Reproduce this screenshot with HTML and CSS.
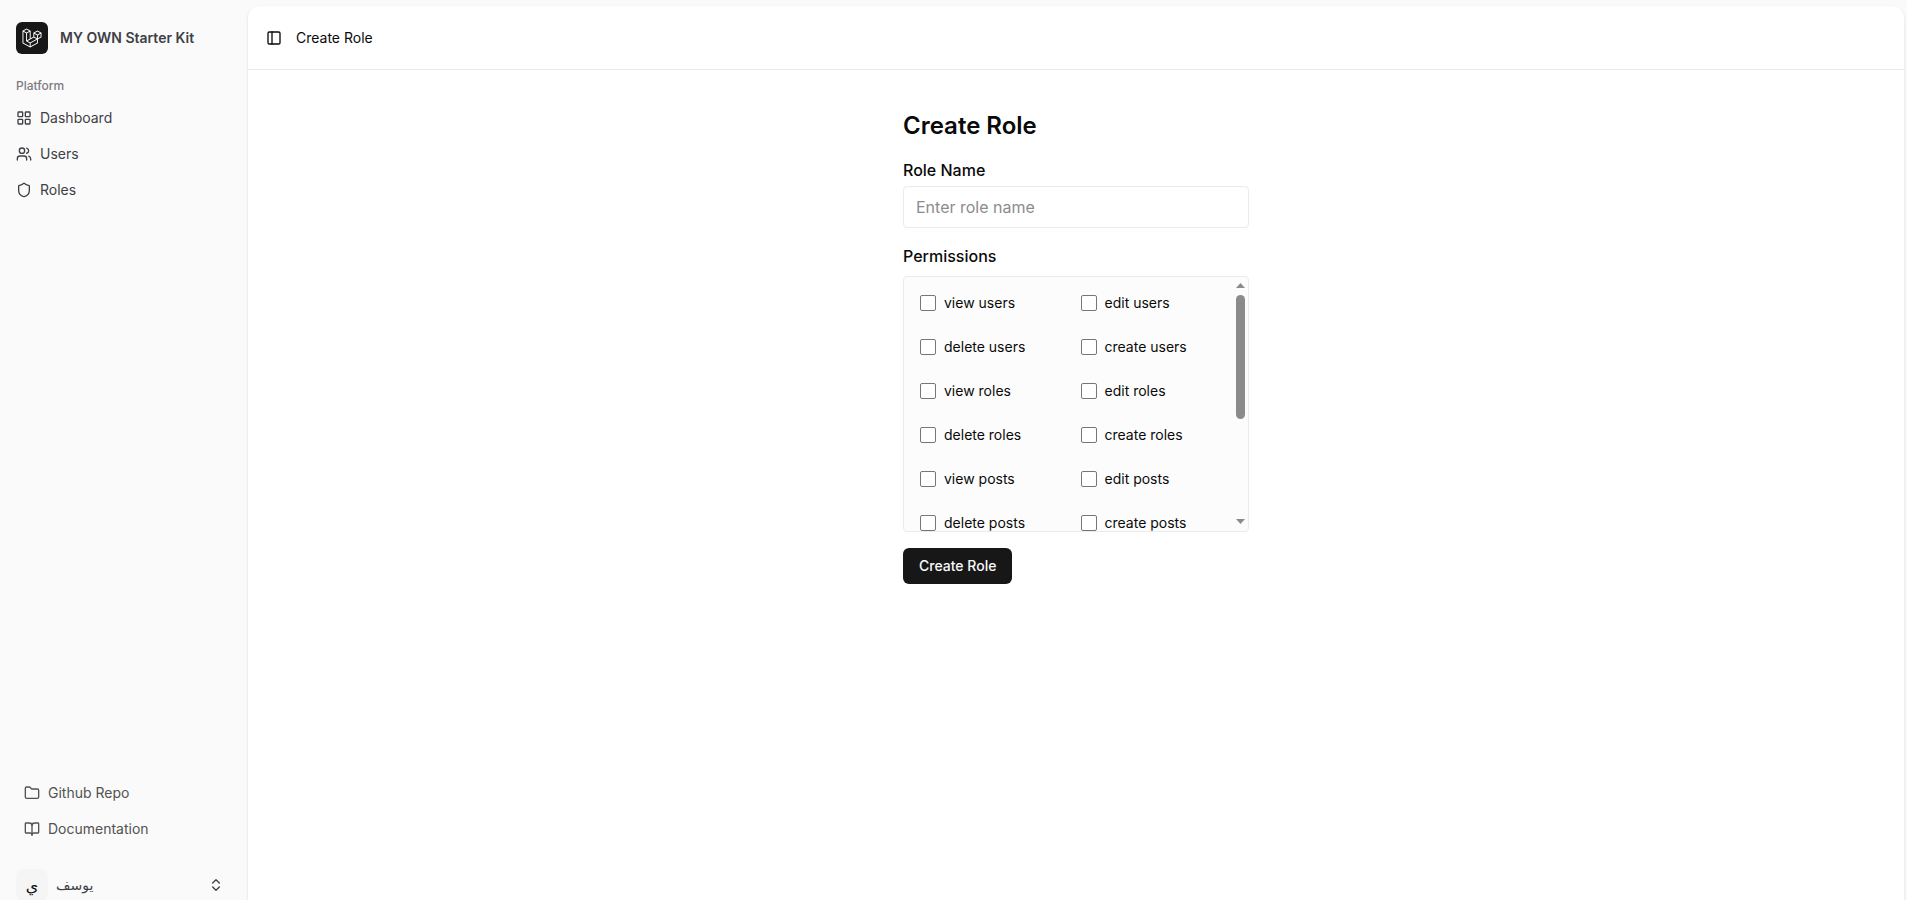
FILE: index.html
```html
<!DOCTYPE html>
<html lang="en">
<head>
<meta charset="utf-8">
<meta name="viewport" content="width=device-width, initial-scale=1">
<title>Create Role</title>
<link rel="stylesheet" href="styles.css">
</head>
<body>
<div class="shell">
  <aside class="sidebar">
    <a class="brand" href="#">
      <span class="brand-mark">
        <svg viewBox="0 0 40 42" fill="currentColor" aria-hidden="true"><path fill-rule="evenodd" clip-rule="evenodd" d="M17.2 5.633 8.6.855 0 5.633v26.51l16.2 9 16.2-9v-8.442l7.6-4.223V9.856l-8.6-4.777-8.6 4.777V18.3l-5.6 3.111V5.633ZM38 18.301l-5.6 3.11v-6.157l5.6-3.11V18.3Zm-1.06-7.856-5.54 3.078-5.54-3.079 5.54-3.078 5.54 3.079ZM24.8 18.3v-6.157l5.6 3.111v6.158L24.8 18.3Zm-1 1.732 5.54 3.078-13.14 7.302-5.54-3.078 13.14-7.3v-.002Zm-16.2 7.89 7.6 4.222V38.3L2 30.966V7.92l5.6 3.111v16.892ZM8.6 9.3 3.06 6.222 8.6 3.143l5.54 3.08L8.6 9.3Zm21.8 15.51-13.2 7.334V38.3l13.2-7.334v-6.156ZM9.6 11.034l5.6-3.11v14.6l-5.6 3.11v-14.6Z"/></svg>
      </span>
      <span class="brand-name">MY OWN Starter Kit</span>
    </a>
    <nav class="nav" aria-label="Platform">
      <h2 class="nav-title">Platform</h2>
      <a class="nav-link" href="#"><svg class="icon" viewBox="0 0 24 24" aria-hidden="true"><rect width="7" height="7" x="3" y="3" rx="1"/><rect width="7" height="7" x="14" y="3" rx="1"/><rect width="7" height="7" x="14" y="14" rx="1"/><rect width="7" height="7" x="3" y="14" rx="1"/></svg>Dashboard</a>
      <a class="nav-link" href="#"><svg class="icon" viewBox="0 0 24 24" aria-hidden="true"><path d="M16 21v-2a4 4 0 0 0-4-4H6a4 4 0 0 0-4 4v2"/><circle cx="9" cy="7" r="4"/><path d="M22 21v-2a4 4 0 0 0-3-3.87"/><path d="M16 3.13a4 4 0 0 1 0 7.75"/></svg>Users</a>
      <a class="nav-link" href="#"><svg class="icon" viewBox="0 0 24 24" aria-hidden="true"><path d="M20 13c0 5-3.5 7.5-7.66 8.95a1 1 0 0 1-.67-.01C7.5 20.5 4 18 4 13V6a1 1 0 0 1 1-1c2 0 4.5-1.2 6.24-2.72a1.17 1.17 0 0 1 1.52 0C14.51 3.81 17 5 19 5a1 1 0 0 1 1 1z"/></svg>Roles</a>
    </nav>
    <div class="sidebar-foot">
      <nav class="foot-nav" aria-label="Resources">
        <a class="nav-link muted" href="#"><svg class="icon" viewBox="0 0 24 24" aria-hidden="true"><path d="M20 20a2 2 0 0 0 2-2V8a2 2 0 0 0-2-2h-7.9a2 2 0 0 1-1.69-.9L9.6 3.9A2 2 0 0 0 7.93 3H4a2 2 0 0 0-2 2v13a2 2 0 0 0 2 2Z"/></svg>Github Repo</a>
        <a class="nav-link muted" href="#"><svg class="icon" viewBox="0 0 24 24" aria-hidden="true"><path d="M12 7v14"/><path d="M3 18a1 1 0 0 1-1-1V4a1 1 0 0 1 1-1h5a4 4 0 0 1 4 4 4 4 0 0 1 4-4h5a1 1 0 0 1 1 1v13a1 1 0 0 1-1 1h-6a3 3 0 0 0-3 3 3 3 0 0 0-3-3z"/></svg>Documentation</a>
      </nav>
      <button class="user" type="button">
        <span class="avatar" lang="ar">ي</span>
        <span class="user-name" lang="ar">يوسف</span>
        <svg class="icon" viewBox="0 0 24 24" aria-hidden="true"><path d="m7 15 5 5 5-5"/><path d="m7 9 5-5 5 5"/></svg>
      </button>
    </div>
  </aside>
  <main class="panel">
    <header class="topbar">
      <button class="toggle" type="button" aria-label="Toggle sidebar"><svg class="icon" viewBox="0 0 24 24" aria-hidden="true"><rect width="18" height="18" x="3" y="3" rx="2"/><path d="M9 3v18"/></svg></button>
      <span class="crumb">Create Role</span>
    </header>
    <form class="form">
      <h1 class="title">Create Role</h1>
      <label class="label" for="role-name">Role Name</label>
      <input class="input" id="role-name" type="text" placeholder="Enter role name">
      <fieldset class="permissions">
        <legend class="label">Permissions</legend>
        <div class="permission-list">
          <label class="option"><input type="checkbox">view users</label>
          <label class="option"><input type="checkbox">edit users</label>
          <label class="option"><input type="checkbox">delete users</label>
          <label class="option"><input type="checkbox">create users</label>
          <label class="option"><input type="checkbox">view roles</label>
          <label class="option"><input type="checkbox">edit roles</label>
          <label class="option"><input type="checkbox">delete roles</label>
          <label class="option"><input type="checkbox">create roles</label>
          <label class="option"><input type="checkbox">view posts</label>
          <label class="option"><input type="checkbox">edit posts</label>
          <label class="option"><input type="checkbox">delete posts</label>
          <label class="option"><input type="checkbox">create posts</label>
        </div>
        <div class="scrollbar" aria-hidden="true">
          <svg class="arrow" viewBox="0 0 9 5"><path d="M4.500 0 9 5H0z"/></svg>
          <span class="thumb"></span>
          <svg class="arrow arrow-down" viewBox="0 0 9 5"><path d="M0 0h9L4.500 5z"/></svg>
        </div>
      </fieldset>
      <button class="submit" type="submit">Create Role</button>
    </form>
  </main>
</div>
</body>
</html>
```
FILE: styles.css
```css
* { box-sizing: border-box; }

body {
  margin: 0;
  overflow: hidden;
  background: #fafafa;
  color: #0a0a0a;
  font: 14px/20px Inter, "DejaVu Sans", sans-serif;
}

a { color: inherit; text-decoration: none; }
button, input { font: inherit; color: inherit; }
button { cursor: pointer; }

.icon {
  width: 16px;
  height: 16px;
  flex: none;
  fill: none;
  stroke: currentColor;
  stroke-width: 2;
  stroke-linecap: round;
  stroke-linejoin: round;
}

.shell {
  display: flex;
  height: calc(100vh + 16px);
  padding-top: 6px;
}

/* Sidebar */
.sidebar {
  display: flex;
  flex-direction: column;
  flex: none;
  width: 248px;
  padding: 16px 16px 15px;
  color: #3f3f46;
}

.brand { display: flex; align-items: center; gap: 12px; }

.brand-mark {
  display: grid;
  place-items: center;
  width: 32px;
  height: 32px;
  border-radius: 6px;
  background: #171717;
  color: #fff;
}
.brand-mark svg { width: 20px; height: 20px; }
.brand-name { font-weight: 600; }

.nav { display: flex; flex-direction: column; gap: 4px; margin-top: 16px; }
.nav-title { margin: 0 0 -4px; font-size: 12px; line-height: 32px; font-weight: 500; color: #7c7c82; }

.nav-link { display: flex; align-items: center; gap: 8px; height: 32px; }
.muted { color: #525252; }

.sidebar-foot { display: flex; flex-direction: column; gap: 24px; margin-top: auto; }
.foot-nav { display: flex; flex-direction: column; gap: 4px; padding-left: 8px; }

.user {
  display: flex;
  align-items: center;
  gap: 8px;
  padding: 0 8px 0 0;
  border: 0;
  background: none;
  text-align: left;
}
.avatar {
  display: grid;
  place-items: center;
  width: 32px;
  height: 32px;
  border-radius: 8px;
  background: #f5f5f5;
  color: #0a0a0a;
  font-size: 16px;
}
.user-name { flex: 1; }

/* Content panel */
.panel {
  flex: 1;
  min-width: 0;
  margin-right: 3px;
  border-radius: 12px;
  background: #fff;
  box-shadow: 0 1px 3px rgb(0 0 0 / 12%);
}

.topbar {
  display: flex;
  align-items: center;
  gap: 14px;
  height: 64px;
  padding: 0 18px;
  border-bottom: 1px solid #ebebeb;
}
.toggle { display: flex; padding: 0; border: 0; background: none; }

.form { width: 346px; max-width: 100%; margin: 0 auto; padding-top: 40px; }
.title { margin: 0 0 16px; font-size: 24px; line-height: 32px; font-weight: 600; }
.label { display: block; padding: 0; font-size: 16px; line-height: 24px; font-weight: 500; }

.input {
  display: block;
  width: 100%;
  height: 42px;
  margin-top: 4px;
  padding: 8px 12px;
  border: 1px solid #ebebeb;
  border-radius: 4px;
  background: #fff;
  font-size: 16px;
}
.input::placeholder { color: #8c8c8c; opacity: 1; }

.permissions { position: relative; min-width: 0; margin: 16px 0; padding: 0; border: 0; }

.permission-list {
  display: grid;
  grid-template-columns: 1fr 1fr;
  grid-auto-rows: 20px;
  gap: 24px;
  height: 256px;
  margin-top: 8px;
  padding: 16px 31px 0 16px;
  overflow: hidden;
  border: 1px solid #ebebeb;
  border-radius: 4px;
  background: #fcfcfc;
}
.option { display: flex; align-items: center; gap: 8px; }
.option input {
  appearance: none;
  width: 16px;
  height: 16px;
  margin: 0;
  border: 1px solid #767676;
  border-radius: 2px;
  background: #fff;
}
.option input:checked { background: #171717; }

/* Scroll indicator over the list's right edge */
.scrollbar {
  position: absolute;
  right: 4px;
  bottom: 0;
  display: flex;
  flex-direction: column;
  align-items: center;
  width: 9px;
  height: 256px;
  padding: 7px 0 8px;
}
.arrow { width: 9px; height: 5px; flex: none; fill: #8b8b8b; }
.arrow-down { margin-top: auto; }
.thumb { width: 9px; height: 124px; margin-top: 7px; border-radius: 5px; background: #8b8b8b; }

.submit {
  height: 36px;
  padding: 0 16px;
  border: 0;
  border-radius: 6px;
  background: #171717;
  color: #fafafa;
  font-weight: 500;
}
```
